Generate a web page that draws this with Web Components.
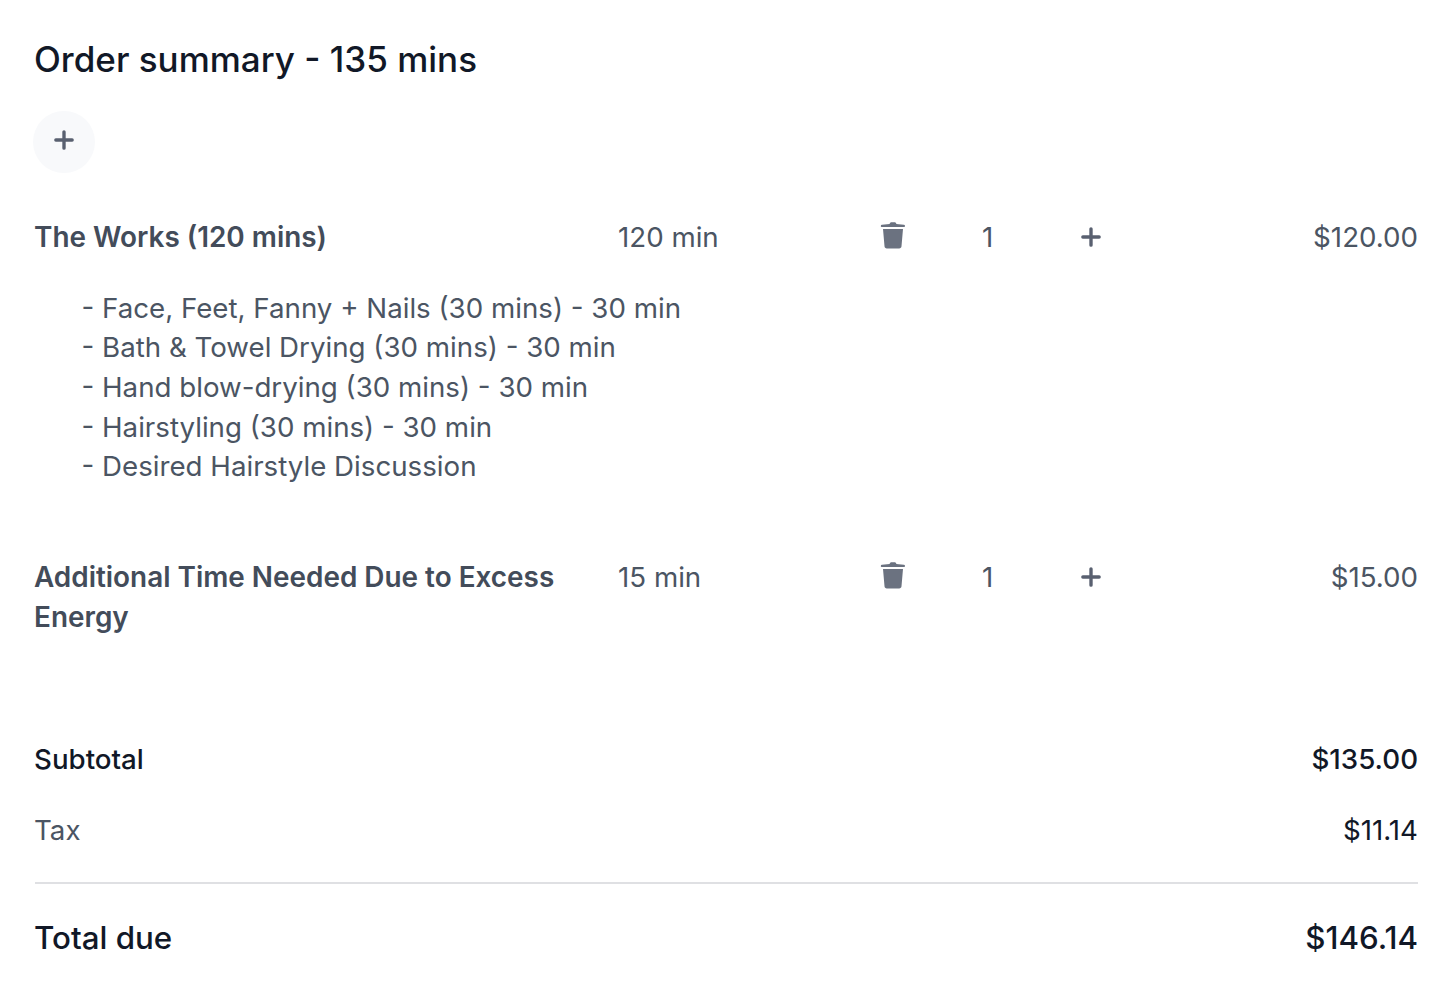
<!DOCTYPE html>
<html lang="en"><head><meta charset="utf-8"><title>Order summary</title>
<style>
html,body{margin:0;background:#fff}
body{font-family:Inter,"Liberation Sans",sans-serif;color:#111827;}
</style></head><body>
<order-summary>
  <span slot="title">Order summary - 135 mins</span>
  <line-item name="The Works (120 mins)" duration="120 min" qty="1" price="$120.00">
    <div>- Face, Feet, Fanny + Nails (30 mins) - 30 min</div>
    <div>- Bath &amp; Towel Drying (30 mins) - 30 min</div>
    <div>- Hand blow-drying (30 mins) - 30 min</div>
    <div>- Hairstyling (30 mins) - 30 min</div>
    <div>- Desired Hairstyle Discussion</div>
  </line-item>
  <line-item name="Additional Time Needed Due to Excess Energy" duration="15 min" qty="1" price="$15.00"></line-item>
  <summary-totals subtotal="$135.00" tax="$11.14" total="$146.14"></summary-totals>
</order-summary>
<script>
const PLUS='<svg viewBox="0 0 20 20" width="24" height="24" fill="none" stroke="currentColor" stroke-width="2.8" stroke-linecap="round" aria-hidden="true"><path d="M10 3.2v13.6M3.2 10h13.6"/></svg>';
const TRASH='<svg viewBox="0 0 26 28" width="26" height="28" aria-hidden="true" fill="#6b7280"><path d="M9.6 2.6C9.8 1.3 10.6.8 11.6.8h2.8c1 0 1.8.5 2 1.8l7.4.7c.8.1 1.2.5 1.2 1.1 0 .6-.5 1-1.2 1H2c-.8 0-1.2-.4-1.2-1 0-.6.4-1 1.2-1.1z"/><path d="M3 7.4h20l-1.5 17.4c-.1 1.3-1 2.2-2.3 2.2H6.8c-1.3 0-2.2-.9-2.3-2.2z"/></svg>';
class OrderSummary extends HTMLElement{constructor(){super();this.attachShadow({mode:'open'}).innerHTML=`<style>
:host{display:block;padding:37px 38px 0 35px}
h2{margin:0 0 0 -1px;font-size:35px;line-height:44px;font-weight:480;color:#111827}
.add{all:unset;display:flex;align-items:center;justify-content:center;box-sizing:border-box;width:62px;height:62px;margin:30px 0 45px -2px;border-radius:50%;background:#f8f9fb;color:#596070;padding-bottom:4px}
</style><h2><slot name="title"></slot></h2><button class="add" aria-label="Add">${PLUS}</button><slot></slot>`}}
class LineItem extends HTMLElement{connectedCallback(){const g=n=>this.getAttribute(n)||'';this.attachShadow({mode:'open'}).innerHTML=`<style>
:host{display:block;font-size:27.7px;line-height:39.6px;color:#4b5563;margin-bottom:71px}
.row{display:grid;grid-template-columns:583px 262px 102px 97px 1fr 200px;align-items:start}
.name{font-size:27.9px;font-weight:600;color:#434c5a;padding:.4px 30px 0 0;margin-left:-1px}
.icon{height:39.6px;display:flex;align-items:center;}
.trash{transform:translateY(-2.5px)}
.qty{color:#4b5563;}
.plus{color:#596070;height:39.6px;display:flex;align-items:center;padding-bottom:1px;box-sizing:border-box}
.price{text-align:right;grid-column:6}
.subs{padding:30.9px 0 0 46.5px}
.subs:not(.has){display:none}
::slotted(div){white-space:nowrap}
</style><div class="row"><div class="name">${g('name')}</div><div>${g('duration')}</div><div class="icon trash">${TRASH}</div><div class="qty">${g('qty')}</div><div class="plus">${PLUS}</div><div class="price">${g('price')}</div></div><div class="subs ${this.children.length?'has':''}"><slot></slot></div>`}}
class SummaryTotals extends HTMLElement{connectedCallback(){const g=n=>this.getAttribute(n)||'';this.attachShadow({mode:'open'}).innerHTML=`<style>
:host{display:block;font-size:27.7px;line-height:39.6px;color:#111827;margin-top:102.8px}
.r{display:flex;justify-content:space-between}
.r span:first-child{margin-left:-1px}
.sub{font-weight:460}
.tax{margin-top:31px;padding-bottom:31.5px;border-bottom:2px solid #dfe0e3}
.tax span:first-child{color:#4b5563;font-weight:400}
.tax span:last-child{font-weight:400}
.total{font-size:31.3px;line-height:44px;font-weight:480;margin-top:32.4px}
</style><div class="r sub"><span>Subtotal</span><span>${g('subtotal')}</span></div><div class="r tax"><span>Tax</span><span>${g('tax')}</span></div><div class="r total"><span>Total due</span><span>${g('total')}</span></div>`}}
customElements.define('order-summary',OrderSummary);
customElements.define('line-item',LineItem);
customElements.define('summary-totals',SummaryTotals);
</script>
</body></html>
